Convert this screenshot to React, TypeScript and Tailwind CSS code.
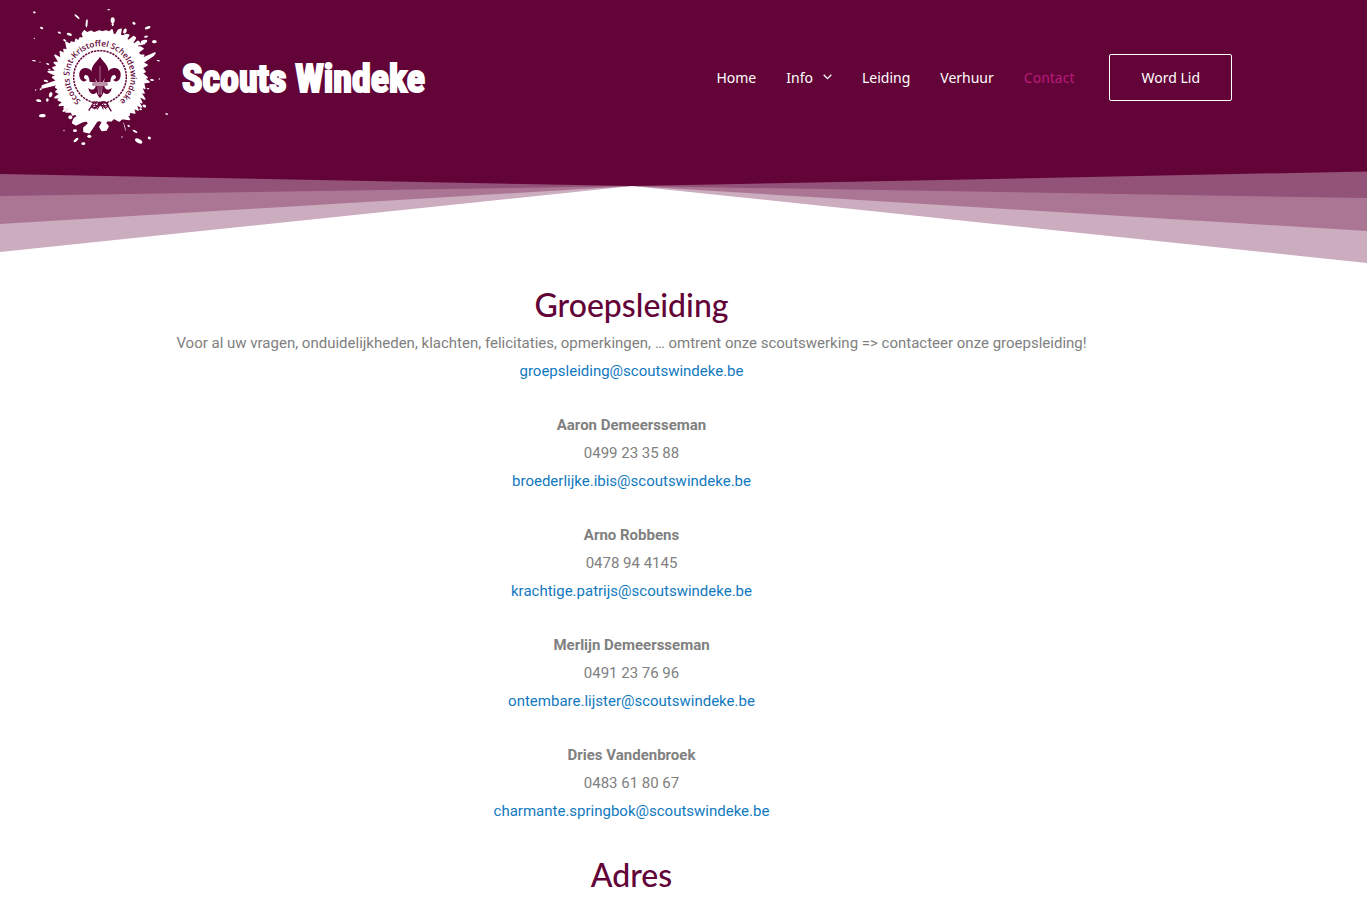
import React from "react";

const people = [
  { name: "Aaron Demeersseman", phone: "0499 23 35 88", mail: "broederlijke.ibis@scoutswindeke.be" },
  { name: "Arno Robbens", phone: "0478 94 4145", mail: "krachtige.patrijs@scoutswindeke.be" },
  { name: "Merlijn Demeersseman", phone: "0491 23 76 96", mail: "ontembare.lijster@scoutswindeke.be" },
  { name: "Dries Vandenbroek", phone: "0483 61 80 67", mail: "charmante.springbok@scoutswindeke.be" },
];

// Ink drops around the badge: cx, cy, rx, ry, rotation
const drops: number[][] = [
  [43, 37, 4, 3, 30], [266, 29, 4, 2, 0], [65, 84, 5, 3, 20], [43, 115, 2, 2, 0],
  [171, 50, 10, 3, 45], [278, 61, 6, 9, 0], [278, 73, 3, 6, 0], [342, 70, 5, 4, 30],
  [383, 83, 9, 4, -20], [378, 110, 6, 3, -10], [403, 125, 7, 5, 0], [372, 125, 10, 5, -15],
  [365, 132, 12, 3, -10], [118, 98, 5, 3, 20], [148, 103, 8, 4, 20], [134, 121, 5, 3, 30],
  [42, 182, 6, 2, 10], [60, 186, 4, 1, 0], [83, 192, 5, 2, 20], [88, 208, 4, 2, 0],
  [415, 182, 5, 2, 10], [418, 237, 2, 2, 0], [396, 240, 6, 3, 10],
  [78, 243, 7, 3, 15], [62, 268, 3, 3, 0], [47, 270, 2, 2, 0], [56, 302, 8, 4, 10],
  [82, 300, 4, 5, 0], [92, 284, 5, 8, 20], [67, 347, 10, 5, -5], [440, 342, 5, 2, 10],
  [373, 318, 6, 4, 30], [362, 328, 4, 3, 0], [132, 392, 2, 2, 0], [151, 352, 6, 6, 0],
  [165, 392, 6, 4, 0], [168, 420, 9, 4, -40], [208, 409, 6, 5, 0], [190, 431, 6, 4, 0],
  [356, 423, 12, 6, 30], [388, 414, 5, 4, 20], [345, 394, 8, 3, 30], [306, 411, 2, 2, 0],
  [314, 380, 1, 14, -15], [326, 378, 4, 3, 30], [200, 70, 3, 12, 5], [315, 93, 5, 8, 20],
  [134, 331, 7, 4, -20], [384, 266, 4, 2, 0],
];

function Badge() {
  return (
    <svg viewBox="36 27 408 408" className="h-[136px] w-[136px] shrink-0" role="img" aria-label="Scouts Sint-Kristoffel Scheldewindeke">
      <g fill="#fff">
        <circle cx="240" cy="226" r="125" />
        <path d="M187 101 L193 93 L201 99 L213 94 L222 99 L238 93 L247 96 L258 93 L268 97 L276 90 L279 103 L287 105 L295 91 L303 88 L300 105 L307 109 L318 104 L326 105 L319 118 L326 122 L341 110 L346 114 L336 131 L344 132 L354 124 L358 128 L348 143 L360 141 L369 146 L354 157 L359 165 L371 166 L364 177 L405 159 L400 166 L368 188 L381 195 L366 203 L375 215 L366 219 L381 233 L367 232 L387 246 L370 248 L374 265 L363 259 L372 279 L360 275 L374 297 L355 286 L365 308 L352 301 L364 321 L347 312 L354 330 L339 323 L344 339 L328 336 L327 346 L318 344 L328 358 L306 355 L298 363 L281 354 L274 362 L261 361 L256 369 L264 379 L258 390 L246 391 L240 381 L248 366 L239 361 L230 364 L218 382 L207 398 L192 394 L192 384 L206 372 L202 362 L189 364 L168 374 L158 368 L163 356 L174 348 L166 342 L158 345 L155 336 L138 336 L147 327 L132 324 L137 315 L118 316 L130 306 L115 300 L128 292 L105 293 L121 281 L108 275 L116 268 L107 261 L116 252 L66 264 L68 257 L111 242 L98 232 L111 227 L85 215 L110 214 L99 203 L113 198 L103 188 L118 187 L105 166 L124 176 L121 155 L135 162 L132 149 L143 151 L138 127 L150 134 L154 126 L165 130 L168 118 L176 125 L180 114 L192 115 Z" strokeLinejoin="round" stroke="#fff" strokeWidth="5" />
        {drops.map(([cx, cy, rx, ry, angle], i) => (
          <ellipse key={i} cx={cx} cy={cy} rx={rx} ry={ry} transform={`rotate(${angle} ${cx} ${cy})`} />
        ))}
      </g>
      <circle cx="240" cy="231" r="79" fill="none" stroke="#630438" strokeWidth="4.5" strokeDasharray="7 2.5" />
      <path id="badge-ring" d="M183 303 A92 92 0 0 1 148 231 A92 92 0 0 1 332 231 A92 92 0 0 1 276 316" fill="none" />
      <text fill="#630438" fontFamily="'Open Sans', sans-serif" fontSize="25" fontWeight="600">
        <textPath href="#badge-ring">Scouts Sint-Kristoffel Scheldewindeke</textPath>
      </text>
      <g fill="#630438">
        <path d="M240 170 C232 184 215 194 215 212 C215 226 227 234 231 246 L249 246 C253 234 265 226 265 212 C265 194 248 184 240 170 Z" />
        <path d="M228 246 C225 220 213 204 196 204 C180 204 174 221 180 235 C185 247 197 246 200 239 C190 237 190 227 197 225 C206 225 208 236 209 246 Z" />
        <path d="M252 246 C255 220 267 204 284 204 C300 204 306 221 300 235 C295 247 283 246 280 239 C290 237 290 227 283 225 C274 225 272 236 271 246 Z" />
        <path d="M228 256 C225 268 218 274 205 264 C208 284 223 286 230 277 C231 284 235 289 240 294 C245 289 249 284 250 277 C257 286 272 284 275 264 C262 274 255 268 252 256 Z" />
      </g>
      <rect x="216" y="246" width="48" height="12" rx="5" fill="#b98ca5" />
      <path d="M240 198 V284 M233 248 L236 284 M247 248 L244 284" stroke="#c9a5b8" strokeWidth="2" />
      <g fill="none" stroke="#630438" strokeWidth="4">
        <path d="M206 332 L221 309 C228 303 238 307 246 316 C254 325 262 324 264 316 C261 303 247 305 240 313 C231 324 220 328 214 319" />
        <path d="M274 334 L259 309 C252 303 242 307 234 316 C226 326 217 325 215 316" />
        <path d="M222 304 L232 328 L246 304 L258 328 M224 328 L240 305 L250 328 M219 317 H262" strokeWidth="3" />
      </g>
    </svg>
  );
}

function Rays() {
  return (
    <svg viewBox="0 0 1367 110" preserveAspectRatio="none" className="block h-[110px] w-full" aria-hidden="true">
      <path d="M0 98 L632 32 L1367 109 V0 H0 Z" fill="#ccacbf" />
      <path d="M0 70 L632 32 L1367 77 V0 H0 Z" fill="#ab7693" />
      <path d="M0 42 L632 32 L1367 44 V0 H0 Z" fill="#935277" />
      <path d="M0 0 V20 L632 32 L1367 17.5 V0 Z" fill="#630438" />
    </svg>
  );
}

function Mail({ address }: { address: string }) {
  return <a href={`mailto:${address}`} className="text-[#1179c0]">{address}</a>;
}

export default function App() {
  const heading = "font-['Lato',sans-serif] text-[32px] leading-[44px] font-medium text-[#630438]";
  return (
    <div className="min-h-screen bg-white font-['Roboto',sans-serif] text-[15px] leading-7 text-[#808080]">
      <header>
        <div className="flex items-center justify-between bg-[#630438] py-[9px] pr-[135px] pl-8">
          <a href="#" className="flex items-center gap-3.5 text-white">
            <Badge />
            <span className="pt-1 font-['Roboto_Condensed','Liberation_Sans_Narrow',sans-serif] text-[38px] leading-[52px] font-bold whitespace-nowrap [-webkit-text-stroke:2px_white]">
              Scouts Windeke
            </span>
          </a>
          <nav className="flex items-center gap-[30px] font-['Noto_Sans',sans-serif] text-sm leading-[29px] text-white">
            <a href="#" className="leading-[29px]">Home</a>
            <a href="#" className="flex items-center gap-2.5 leading-[29px]">
              Info
              <svg viewBox="0 0 9 6" className="h-1.5 w-[9px]" fill="none" stroke="currentColor" strokeWidth="1.3" aria-hidden="true">
                <path d="M0.7 0.8 L4.5 4.6 L8.3 0.8" />
              </svg>
            </a>
            <a href="#">Leiding</a>
            <a href="#">Verhuur</a>
            <a href="#" aria-current="page" className="text-[#b81b78]">Contact</a>
            <a href="#" className="ml-[5px] rounded-xs border border-white px-[31px] py-2">Word Lid</a>
          </nav>
        </div>
        <Rays />
      </header>
      <main className="pt-[19px] pr-[104px] text-center">
        <section className="flex flex-col gap-[26px]">
          <div>
            <h1 className={`${heading} mb-0.5`}>Groepsleiding</h1>
            <p>
              Voor al uw vragen, onduidelijkheden, klachten, felicitaties, opmerkingen, … omtrent onze scoutswerking =&gt; contacteer onze groepsleiding!
            </p>
            <p><Mail address="groepsleiding@scoutswindeke.be" /></p>
          </div>
          {people.map((person) => (
            <div key={person.mail}>
              <p className="font-bold">{person.name}</p>
              <p>{person.phone}</p>
              <p><Mail address={person.mail} /></p>
            </div>
          ))}
        </section>
        <section className="pt-7">
          <h2 className={heading}>Adres</h2>
        </section>
      </main>
    </div>
  );
}
